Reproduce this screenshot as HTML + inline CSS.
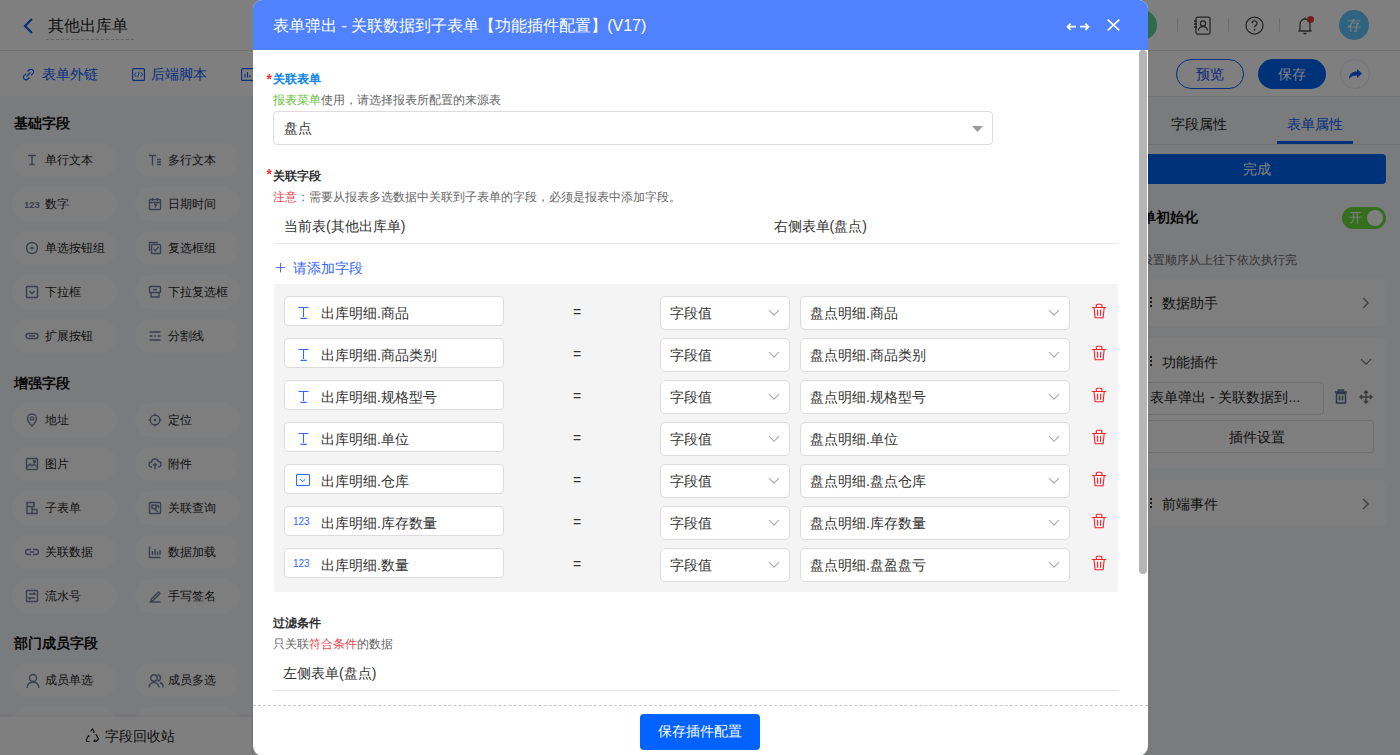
<!DOCTYPE html>
<html><head><meta charset="utf-8"><style>
*{box-sizing:border-box;margin:0;padding:0}
html,body{width:1400px;height:755px;overflow:hidden;background:#fff}
body{position:relative;font-family:"Liberation Sans",sans-serif;color:#333;font-size:14px}
.a{position:absolute;white-space:nowrap}
#hdr{left:0;top:0;width:1400px;height:51px;background:#fff;border-bottom:1px solid #e6e6e6}
#tb{left:0;top:51px;width:1400px;height:45px;background:#fff;box-shadow:0 1px 3px rgba(0,0,0,.05)}
#side{left:0;top:96px;width:253px;height:659px;background:#f5f6f9;border-right:1px solid #e3e5e8}
#rp{left:1120px;top:96px;width:280px;height:659px;background:#f5f6f9;border-top:1px solid #e6e8eb}
.pill{position:absolute;height:34px;border-radius:17px;background:#fcfcfd;width:105px}
.pill span{position:absolute;left:33px;top:0;line-height:34px;font-size:12px;color:#262626}
.pill svg{position:absolute;left:13px;top:10px}
.sect{position:absolute;left:14px;font-size:14px;font-weight:bold;color:#111;line-height:20px}
#mask{left:0;top:0;width:1400px;height:755px;background:rgba(0,0,0,.5)}
#modal{left:253px;top:0;width:895px;height:756px;background:#fff;border-radius:9px 9px 10px 10px;overflow:hidden}
#mh{left:0;top:0;width:895px;height:50px;background:#5082ff}
.lbl{font-size:12px;font-weight:bold;color:#303133;line-height:16px}
.hint{font-size:12px;color:#666;line-height:16px}
.t14{font-size:14px;color:#333;line-height:20px}
.inp{position:absolute;left:31px;width:220px;height:30px;background:#fff;border:1px solid #dcdcdc;border-radius:4px}
.inp svg{position:absolute}
.inp span{position:absolute;left:36px;top:6px;font-size:14px;line-height:20px;color:#333}
.eq{position:absolute;left:320px;font-size:14px;line-height:20px;color:#333}
.sel{position:absolute;height:34px;background:#fff;border:1px solid #dcdcdc;border-radius:5px}
.sel span{position:absolute;left:9px;top:6px;font-size:14px;line-height:20px;color:#333}
.sel svg{position:absolute;top:13px}
.trash{position:absolute;left:838px}
.card{position:absolute;left:1100px;width:286px;background:#fdfdfd;border-radius:6px}
</style></head><body>

<div id="hdr" class="a"></div>
<div id="tb" class="a"></div>
<div id="side" class="a"></div>
<div id="rp" class="a"></div>

<!-- header -->
<svg class="a" style="left:22px;top:17px" width="14" height="18" viewBox="0 0 14 18"><path d="M10 2L3 9l7 7" stroke="#0a5cff" stroke-width="2.2" fill="none"/></svg>
<div class="a" style="left:48px;top:15px;font-size:16px;line-height:22px;color:#222">其他出库单</div>
<div class="a" style="left:46px;top:39px;width:88px;border-top:1px dashed #c8c8c8"></div>
<div class="a" style="left:1127px;top:10px;width:30px;height:30px;border-radius:15px;background:#5cd698"></div>
<div class="a" style="left:1177px;top:18px;width:1px;height:14px;background:#ddd"></div>
<svg class="a" style="left:1193px;top:16px" width="19" height="19" viewBox="0 0 19 19"><rect x="3" y="1" width="14" height="17" rx="1.5" stroke="#4a4a4a" stroke-width="1.25" fill="none"/><circle cx="10" cy="7.5" r="2.6" stroke="#4a4a4a" stroke-width="1.3" fill="none"/><path d="M5.5 14.5a4.5 4 0 0 1 9 0M1 5h3M1 8h3M1 11h3" stroke="#4a4a4a" stroke-width="1.3" fill="none"/></svg>
<div class="a" style="left:1228px;top:18px;width:1px;height:14px;background:#ddd"></div>
<svg class="a" style="left:1245px;top:16px" width="19" height="19" viewBox="0 0 19 19"><circle cx="9.5" cy="9.5" r="8.5" stroke="#4a4a4a" stroke-width="1.25" fill="none"/><path d="M7 7.3a2.5 2.5 0 1 1 3.5 2.3c-.8.4-1 .9-1 1.7" stroke="#4a4a4a" stroke-width="1.25" fill="none"/><circle cx="9.5" cy="13.8" r=".9" fill="#4a4a4a"/></svg>
<div class="a" style="left:1279px;top:18px;width:1px;height:14px;background:#ddd"></div>
<svg class="a" style="left:1297px;top:15px" width="16" height="20" viewBox="0 0 16 20"><path d="M3 15.5V9.5a5 5.5 0 0 1 10 0v6l1.5 .5h-13zM6.5 18.5h3M8 2.5v1.5" stroke="#4a4a4a" stroke-width="1.3" fill="none"/></svg>
<div class="a" style="left:1307px;top:16px;width:6.5px;height:6.5px;border-radius:4px;background:#e83a3a"></div>
<div class="a" style="left:1339px;top:10px;width:30px;height:30px;border-radius:15px;background:#5fc6ff;color:#fff;font-size:14px;line-height:30px;text-align:center">存</div>

<!-- toolbar -->
<svg class="a" style="left:22px;top:68px" width="13" height="13" viewBox="0 0 13 13"><path d="M5.5 3.5l1.5-1.5a2.6 2.6 0 0 1 3.7 3.7L9 7.3M7.5 9.5L6 11a2.6 2.6 0 0 1-3.7-3.7L4 5.7M4.5 8.5l4-4" stroke="#0a5cff" stroke-width="1.1" fill="none"/></svg>
<div class="a" style="left:42px;top:64px;font-size:14px;line-height:20px;color:#0a5cff">表单外链</div>
<svg class="a" style="left:132px;top:68px" width="13" height="13" viewBox="0 0 13 13"><rect x=".6" y=".6" width="11.8" height="11.8" rx="1" stroke="#0a5cff" stroke-width="1.1" fill="none"/><path d="M4 4.5L2.5 6.5 4 8.5M9 4.5l1.5 2-1.5 2M7.2 3.8L5.8 9.2" stroke="#0a5cff" stroke-width="1" fill="none"/></svg>
<div class="a" style="left:151px;top:64px;font-size:14px;line-height:20px;color:#0a5cff">后端脚本</div>
<svg class="a" style="left:241px;top:68px" width="13" height="13" viewBox="0 0 13 13"><rect x=".6" y=".6" width="11.8" height="11.8" rx="1" stroke="#0a5cff" stroke-width="1.1" fill="none"/><path d="M4 9.5V6M6.5 9.5V4M9 9.5V7" stroke="#0a5cff" stroke-width="1.1" fill="none"/></svg>
<div class="a" style="left:1176px;top:59px;width:68px;height:30px;border-radius:15px;border:1px solid #0a5cff;color:#1a4cff;font-size:14px;line-height:28px;text-align:center">预览</div>
<div class="a" style="left:1258px;top:59px;width:68px;height:30px;border-radius:15px;background:#0064f5;color:#fff;font-size:14px;line-height:30px;text-align:center">保存</div>
<div class="a" style="left:1340px;top:59px;width:30px;height:30px;border-radius:15px;border:1px solid #e3e8f5;background:#fff"></div>
<svg class="a" style="left:1347px;top:66px" width="16" height="16" viewBox="0 0 16 16"><path d="M2 13c0-5 3-7.5 8-7.5V3l5 4.5-5 4.5V9.5c-4 0-6 1-8 3.5z" fill="#1a5cff"/></svg>

<!-- sidebar -->
<div class="sect" style="top:113px">基础字段</div>
<div class="sect" style="top:373px">增强字段</div>
<div class="sect" style="top:633px">部门成员字段</div>
<div class="pill" style="left:12px;top:143px"><svg width="14" height="14" viewBox="0 0 14 14"><path d="M3 2.5h8M7 2.5v9M4.5 11.5h5" stroke="#76809c" fill="none" stroke-width="1.4"/></svg><span>单行文本</span></div>
<div class="pill" style="left:135px;top:143px"><svg width="14" height="14" viewBox="0 0 14 14"><path d="M1 2.5h7M4.5 2.5v10M9 6.5h4M9 9h4M9 11.5h4" stroke="#76809c" fill="none" stroke-width="1.4"/></svg><span>多行文本</span></div>
<div class="pill" style="left:12px;top:187px"><svg width="16" height="14" viewBox="0 0 16 14"><text x="-1" y="11" font-family="Liberation Sans" font-size="9.5" font-weight="bold" fill="#76809c">123</text></svg><span>数字</span></div>
<div class="pill" style="left:135px;top:187px"><svg width="14" height="14" viewBox="0 0 14 14"><rect x="1.5" y="2.5" width="11" height="10" rx="1" stroke="#76809c" fill="none" stroke-width="1.4"/><path d="M1.5 5.5h11M4.5 1v3M9.5 1v3M6 7.5h2.5l-1.5 3" stroke="#76809c" fill="none" stroke-width="1.4"/></svg><span>日期时间</span></div>
<div class="pill" style="left:12px;top:231px"><svg width="14" height="14" viewBox="0 0 14 14"><circle cx="7" cy="7" r="5.5" stroke="#76809c" fill="none" stroke-width="1.4"/><circle cx="7" cy="7" r="1.6" fill="#76809c"/></svg><span>单选按钮组</span></div>
<div class="pill" style="left:135px;top:231px"><svg width="14" height="14" viewBox="0 0 14 14"><path d="M1.5 10V1.5H10" stroke="#76809c" fill="none" stroke-width="1.4"/><rect x="3.5" y="3.5" width="9" height="9" rx="1" stroke="#76809c" fill="none" stroke-width="1.4"/><path d="M5.5 8l1.7 1.7L10.5 6" stroke="#76809c" fill="none" stroke-width="1.4"/></svg><span>复选框组</span></div>
<div class="pill" style="left:12px;top:275px"><svg width="14" height="14" viewBox="0 0 14 14"><rect x="1.5" y="1.5" width="11" height="11" rx="1" stroke="#76809c" fill="none" stroke-width="1.4"/><path d="M4.5 6l2.5 2.5L9.5 6" stroke="#76809c" fill="none" stroke-width="1.4"/></svg><span>下拉框</span></div>
<div class="pill" style="left:135px;top:275px"><svg width="14" height="14" viewBox="0 0 14 14"><rect x="1.5" y="1.5" width="11" height="6" rx="1" stroke="#76809c" fill="none" stroke-width="1.4"/><path d="M3 7.5v4.5h8V7.5M5 4.5h4" stroke="#76809c" fill="none" stroke-width="1.4"/></svg><span>下拉复选框</span></div>
<div class="pill" style="left:12px;top:319px"><svg width="14" height="14" viewBox="0 0 14 14"><rect x="1" y="4.5" width="12" height="5" rx="2.5" stroke="#76809c" fill="none" stroke-width="1.4"/><path d="M4 7h6" stroke="#76809c" fill="none" stroke-width="1.4"/></svg><span>扩展按钮</span></div>
<div class="pill" style="left:135px;top:319px"><svg width="14" height="14" viewBox="0 0 14 14"><path d="M1.5 3h11M1.5 7h3M6 7h2M9.5 7h3M1.5 11h11" stroke="#76809c" fill="none" stroke-width="1.4"/></svg><span>分割线</span></div>
<div class="pill" style="left:12px;top:403px"><svg width="14" height="14" viewBox="0 0 14 14"><path d="M7 13s-4.5-4.5-4.5-7.5a4.5 4.5 0 0 1 9 0C11.5 8.5 7 13 7 13z" stroke="#76809c" fill="none" stroke-width="1.4"/><circle cx="7" cy="5.5" r="1.6" stroke="#76809c" fill="none" stroke-width="1.4"/></svg><span>地址</span></div>
<div class="pill" style="left:135px;top:403px"><svg width="14" height="14" viewBox="0 0 14 14"><circle cx="7" cy="7" r="4.8" stroke="#76809c" fill="none" stroke-width="1.4"/><circle cx="7" cy="7" r="1.3" fill="#76809c"/><path d="M7 0.5v2.5M7 11v2.5M0.5 7H3M11 7h2.5" stroke="#76809c" fill="none" stroke-width="1.4"/></svg><span>定位</span></div>
<div class="pill" style="left:12px;top:447px"><svg width="14" height="14" viewBox="0 0 14 14"><rect x="1.5" y="1.5" width="11" height="11" rx="1" stroke="#76809c" fill="none" stroke-width="1.4"/><path d="M2 10l3-3 2 2 2-2 3 3" stroke="#76809c" fill="none" stroke-width="1.4"/><circle cx="9.5" cy="4.5" r="1" stroke="#76809c" fill="none" stroke-width="1.4"/></svg><span>图片</span></div>
<div class="pill" style="left:135px;top:447px"><svg width="14" height="14" viewBox="0 0 14 14"><path d="M4 10H3.5a2.5 2.5 0 0 1 0-5 3.5 3.5 0 0 1 6.8-.5A2.6 2.6 0 0 1 10.5 10H10M7 6.5V12.5M5 8.5l2-2 2 2" stroke="#76809c" fill="none" stroke-width="1.4"/></svg><span>附件</span></div>
<div class="pill" style="left:12px;top:491px"><svg width="14" height="14" viewBox="0 0 14 14"><path d="M2 1.5h7v4H2zM2 5.5v7h5v-7M7 8.5h5v4H7" stroke="#76809c" fill="none" stroke-width="1.4"/></svg><span>子表单</span></div>
<div class="pill" style="left:135px;top:491px"><svg width="14" height="14" viewBox="0 0 14 14"><rect x="1.5" y="1.5" width="11" height="11" rx="1" stroke="#76809c" fill="none" stroke-width="1.4"/><rect x="4" y="4" width="4" height="3.5" stroke="#76809c" fill="none" stroke-width="1.4"/><path d="M6 7.5l4 3.5M8 5h2.5v2" stroke="#76809c" fill="none" stroke-width="1.4"/></svg><span>关联查询</span></div>
<div class="pill" style="left:12px;top:535px"><svg width="14" height="14" viewBox="0 0 14 14"><path d="M6 4.5H3a2.5 2.5 0 0 0 0 5h3M8 4.5h3a2.5 2.5 0 0 1 0 5H8M5 7h4" stroke="#76809c" fill="none" stroke-width="1.4"/></svg><span>关联数据</span></div>
<div class="pill" style="left:135px;top:535px"><svg width="14" height="14" viewBox="0 0 14 14"><path d="M1.5 1.5v11h11M4.5 10V6M7 10V4M9.5 10V6.5M12 10V5" stroke="#76809c" fill="none" stroke-width="1.4"/></svg><span>数据加载</span></div>
<div class="pill" style="left:12px;top:579px"><svg width="14" height="14" viewBox="0 0 14 14"><rect x="1.5" y="1.5" width="11" height="11" rx="1" stroke="#76809c" fill="none" stroke-width="1.4"/><path d="M4 5h6l-1.5-1.5M10 9H4l1.5 1.5" stroke="#76809c" fill="none" stroke-width="1.4"/></svg><span>流水号</span></div>
<div class="pill" style="left:135px;top:579px"><svg width="14" height="14" viewBox="0 0 14 14"><path d="M3 10.5L10.5 3l1.5 1.5L4.5 12H3zM1.5 13h11" stroke="#76809c" fill="none" stroke-width="1.4"/></svg><span>手写签名</span></div>
<div class="pill" style="left:12px;top:663px"><svg width="16" height="16" viewBox="0 0 16 16"><circle cx="8" cy="5" r="3.5" stroke="#76809c" fill="none" stroke-width="1.4"/><path d="M2 15a6 6 0 0 1 12 0" stroke="#76809c" fill="none" stroke-width="1.4"/></svg><span>成员单选</span></div>
<div class="pill" style="left:135px;top:663px"><svg width="16" height="16" viewBox="0 0 16 16"><circle cx="6" cy="5" r="3.2" stroke="#76809c" fill="none" stroke-width="1.4"/><path d="M1 14.5a5 5 0 0 1 10 0M9.5 2a3 3 0 0 1 0 6M12 9.5a4.5 4.5 0 0 1 3 5" stroke="#76809c" fill="none" stroke-width="1.4"/></svg><span>成员多选</span></div>
<div class="pill" style="left:12px;top:707px"><span></span></div>
<div class="pill" style="left:135px;top:707px"><span></span></div>
<div class="a" style="left:0;top:717px;width:252px;height:38px;background:#fff;box-shadow:0 -2px 4px rgba(0,0,0,.04)"></div>
<svg class="a" style="left:85px;top:728px" width="15" height="15" viewBox="0 0 15 15"><path d="M5.5 3.5L7.5 1l2 3.2M10.8 6l2.7 5-2.2 2.5H8.5M4.5 13.5H2L1.2 12 3.7 7.3M9.5 4.2l-1.5.3M3.7 7.3l.4 1.6M8.5 13.5l1.2-1.2 0 1.2" stroke="#222" stroke-width="1.2" fill="none"/></svg>
<div class="a" style="left:105px;top:726px;font-size:14px;line-height:20px;color:#222">字段回收站</div>

<!-- right panel -->
<div class="a" style="left:1171px;top:114px;font-size:14px;line-height:20px;color:#222">字段属性</div>
<div class="a" style="left:1287px;top:114px;font-size:14px;line-height:20px;color:#0a5cff">表单属性</div>
<div class="a" style="left:1120px;top:144px;width:280px;height:1px;background:#e3e5e8"></div>
<div class="a" style="left:1277px;top:141px;width:76px;height:3px;background:#0064f5"></div>
<div class="a" style="left:1100px;top:154px;width:286px;height:30px;border-radius:4px;background:#0064f5;color:#fff;font-size:14px;line-height:30px;text-align:center;padding-left:28px">完成</div>
<div class="a" style="left:1128px;top:207px;font-size:14px;font-weight:bold;line-height:20px;color:#111">表单初始化</div>
<div class="a" style="left:1342px;top:207px;width:44px;height:22px;border-radius:11px;background:#6adc3a"></div>
<div class="a" style="left:1349px;top:208px;font-size:13px;line-height:20px;color:#fff">开</div>
<div class="a" style="left:1367px;top:210px;width:16px;height:16px;border-radius:8px;background:#fff"></div>
<div class="a" style="left:1141px;top:252px;font-size:12px;line-height:16px;color:#666">设置顺序从上往下依次执行完</div>

<div class="card" style="top:279px;height:47px"></div>
<div class="a" style="left:1150px;top:297px;width:2px;height:2px;background:#333;box-shadow:0 4px 0 #333,0 8px 0 #333"></div>
<div class="a" style="left:1162px;top:293px;font-size:14px;line-height:20px;color:#222">数据助手</div>
<svg class="a" style="left:1362px;top:297px" width="8" height="12" viewBox="0 0 8 12"><path d="M1.2 1l5 5-5 5" stroke="#777" stroke-width="1.2" fill="none"/></svg>

<div class="card" style="top:338px;height:130px"></div>
<div class="a" style="left:1150px;top:356px;width:2px;height:2px;background:#333;box-shadow:0 4px 0 #333,0 8px 0 #333"></div>
<div class="a" style="left:1162px;top:352px;font-size:14px;line-height:20px;color:#222">功能插件</div>
<svg class="a" style="left:1360px;top:358px" width="12" height="8" viewBox="0 0 12 8"><path d="M1 1.2l5 5 5-5" stroke="#777" stroke-width="1.2" fill="none"/></svg>
<div class="a" style="left:1100px;top:382px;width:224px;height:33px;border-radius:4px;border:1px solid #dcdcdc;background:#fdfdfd"></div>
<div class="a" style="left:1150px;top:387px;font-size:14px;line-height:20px;color:#222">表单弹出 - 关联数据到...</div>
<svg class="a" style="left:1334px;top:389px" width="14" height="15" viewBox="0 0 14 15"><path d="M1 3h12M4.5 3V1h5v2M2.5 4.5h9v9.5h-9zM5.5 6.5v5M8.5 6.5v5" stroke="#5a6e90" stroke-width="1.6" fill="none"/></svg>
<svg class="a" style="left:1359px;top:390px" width="14" height="14" viewBox="0 0 14 14"><path d="M7 1v12M1 7h12M5 3l2-2 2 2M5 11l2 2 2-2M3 5L1 7l2 2M11 5l2 2-2 2" stroke="#777" stroke-width="1.5" fill="none"/></svg>
<div class="a" style="left:1100px;top:420px;width:274px;height:33px;border-radius:3px;border:1px solid #dcdcdc;background:#fdfdfd;font-size:14px;line-height:33px;color:#222;text-align:center;padding-left:40px">插件设置</div>

<div class="card" style="top:480px;height:47px"></div>
<div class="a" style="left:1150px;top:498px;width:2px;height:2px;background:#333;box-shadow:0 4px 0 #333,0 8px 0 #333"></div>
<div class="a" style="left:1162px;top:494px;font-size:14px;line-height:20px;color:#222">前端事件</div>
<svg class="a" style="left:1362px;top:498px" width="8" height="12" viewBox="0 0 8 12"><path d="M1.2 1l5 5-5 5" stroke="#777" stroke-width="1.2" fill="none"/></svg>

<div id="mask" class="a"></div>

<div id="modal" class="a">
  <div id="mh" class="a"></div>
  <div class="a" style="left:20px;top:15px;font-size:16px;line-height:22px;color:#fff">表单弹出 - 关联数据到子表单【功能插件配置】(V17)</div>
  <svg class="a" style="left:813px;top:21px" width="24" height="12" viewBox="0 0 24 12"><path d="M1.5 5.7h8.5M4.6 2.6L1.5 5.7l3.1 3.1M14 5.7h8.5M19.4 2.6l3.1 3.1-3.1 3.1" stroke="#fff" stroke-width="1.7" fill="none"/></svg>
  <svg class="a" style="left:854px;top:19px" width="13" height="12" viewBox="0 0 13 12"><path d="M.7 .6l11.6 10.8M12.3 .6L.7 11.4" stroke="#fff" stroke-width="1.6" fill="none"/></svg>
  <div class="a" style="left:886px;top:50px;width:8px;height:524px;border-radius:4px;background:#b5b5b5"></div>

  <div class="a" style="left:13.5px;top:71px;font-size:14px;line-height:16px;font-weight:bold;color:#e63c3c">*</div>
  <div class="a" style="left:13.5px;top:166px;font-size:14px;line-height:16px;font-weight:bold;color:#e63c3c">*</div><div class="a lbl" style="left:20px;top:71px"><span style="color:#0a84e6">关联表单</span></div>
  <div class="a hint" style="left:20px;top:92px"><span style="color:#67c23a">报表菜单</span>使用，请选择报表所配置的来源表</div>
  <div class="a" style="left:20px;top:111px;width:720px;height:34px;border:1px solid #dcdcdc;border-radius:4px"></div>
  <div class="a t14" style="left:30.5px;top:118px">盘点</div>
  <svg class="a" style="left:719px;top:126px" width="11" height="6" viewBox="0 0 11 6"><path d="M0 0h11L5.5 6z" fill="#999"/></svg>

  <div class="a lbl" style="left:20px;top:168px">关联字段</div>
  <div class="a hint" style="left:20px;top:189px"><span style="color:#e8474f">注意</span>：需要从报表多选数据中关联到子表单的字段，必须是报表中添加字段。</div>
  <div class="a t14" style="left:31px;top:216px">当前表(其他出库单)</div>
  <div class="a t14" style="left:520.5px;top:216px">右侧表单(盘点)</div>
  <div class="a" style="left:21px;top:243px;width:845px;height:1px;background:#e8e8e8"></div>
  <svg class="a" style="left:22px;top:263px" width="11" height="10" viewBox="0 0 11 10"><path d="M5.5 0v9.4M.8 4.6h9.6" stroke="#5866ff" stroke-width="1" fill="none"/></svg>
  <div class="a t14" style="left:40px;top:258px;color:#3366ff">请添加字段</div>
  <div class="a" style="left:21px;top:284px;width:844px;height:308px;background:#f4f4f4;border-radius:2px"></div>
  <div class="inp" style="top:296px"><svg style="left:12px;top:9px" width="12" height="14" viewBox="0 0 12 14"><path d="M1.5 1.5h10M6.5 1.5v9.4M3.5 12.4h6.3" stroke="#2f6bff" stroke-width="1.1" fill="none"/></svg><span>出库明细.商品</span></div>
<div class="eq" style="top:302px">=</div>
<div class="sel" style="left:407px;top:296px;width:130px"><span>字段值</span><svg style="left:107px;top:12px" width="12" height="8" viewBox="0 0 12 8"><path d="M1 1.2l5 5 5-5" stroke="#a8abb2" stroke-width="1.1" fill="none"/></svg></div>
<div class="sel" style="left:547px;top:296px;width:270px"><span>盘点明细.商品</span><svg style="left:247px;top:12px" width="12" height="8" viewBox="0 0 12 8"><path d="M1 1.2l5 5 5-5" stroke="#a8abb2" stroke-width="1.1" fill="none"/></svg></div>
<div class="trash" style="top:302px"><svg width="16" height="17" viewBox="0 0 16 17"><path d="M1.1 5.5h14M5.3 5.5V3.3q0-1 1-1h3.6q1 0 1 1v2.2M3 5.5l1.1 10.2h8l1.1-10.2M6.6 7.8v6M9.7 7.8l-.2 6" stroke="#ff1f2a" stroke-width="1.1" fill="none"/></svg></div><div class="inp" style="top:338px"><svg style="left:12px;top:9px" width="12" height="14" viewBox="0 0 12 14"><path d="M1.5 1.5h10M6.5 1.5v9.4M3.5 12.4h6.3" stroke="#2f6bff" stroke-width="1.1" fill="none"/></svg><span>出库明细.商品类别</span></div>
<div class="eq" style="top:344px">=</div>
<div class="sel" style="left:407px;top:338px;width:130px"><span>字段值</span><svg style="left:107px;top:12px" width="12" height="8" viewBox="0 0 12 8"><path d="M1 1.2l5 5 5-5" stroke="#a8abb2" stroke-width="1.1" fill="none"/></svg></div>
<div class="sel" style="left:547px;top:338px;width:270px"><span>盘点明细.商品类别</span><svg style="left:247px;top:12px" width="12" height="8" viewBox="0 0 12 8"><path d="M1 1.2l5 5 5-5" stroke="#a8abb2" stroke-width="1.1" fill="none"/></svg></div>
<div class="trash" style="top:344px"><svg width="16" height="17" viewBox="0 0 16 17"><path d="M1.1 5.5h14M5.3 5.5V3.3q0-1 1-1h3.6q1 0 1 1v2.2M3 5.5l1.1 10.2h8l1.1-10.2M6.6 7.8v6M9.7 7.8l-.2 6" stroke="#ff1f2a" stroke-width="1.1" fill="none"/></svg></div><div class="inp" style="top:380px"><svg style="left:12px;top:9px" width="12" height="14" viewBox="0 0 12 14"><path d="M1.5 1.5h10M6.5 1.5v9.4M3.5 12.4h6.3" stroke="#2f6bff" stroke-width="1.1" fill="none"/></svg><span>出库明细.规格型号</span></div>
<div class="eq" style="top:386px">=</div>
<div class="sel" style="left:407px;top:380px;width:130px"><span>字段值</span><svg style="left:107px;top:12px" width="12" height="8" viewBox="0 0 12 8"><path d="M1 1.2l5 5 5-5" stroke="#a8abb2" stroke-width="1.1" fill="none"/></svg></div>
<div class="sel" style="left:547px;top:380px;width:270px"><span>盘点明细.规格型号</span><svg style="left:247px;top:12px" width="12" height="8" viewBox="0 0 12 8"><path d="M1 1.2l5 5 5-5" stroke="#a8abb2" stroke-width="1.1" fill="none"/></svg></div>
<div class="trash" style="top:386px"><svg width="16" height="17" viewBox="0 0 16 17"><path d="M1.1 5.5h14M5.3 5.5V3.3q0-1 1-1h3.6q1 0 1 1v2.2M3 5.5l1.1 10.2h8l1.1-10.2M6.6 7.8v6M9.7 7.8l-.2 6" stroke="#ff1f2a" stroke-width="1.1" fill="none"/></svg></div><div class="inp" style="top:422px"><svg style="left:12px;top:9px" width="12" height="14" viewBox="0 0 12 14"><path d="M1.5 1.5h10M6.5 1.5v9.4M3.5 12.4h6.3" stroke="#2f6bff" stroke-width="1.1" fill="none"/></svg><span>出库明细.单位</span></div>
<div class="eq" style="top:428px">=</div>
<div class="sel" style="left:407px;top:422px;width:130px"><span>字段值</span><svg style="left:107px;top:12px" width="12" height="8" viewBox="0 0 12 8"><path d="M1 1.2l5 5 5-5" stroke="#a8abb2" stroke-width="1.1" fill="none"/></svg></div>
<div class="sel" style="left:547px;top:422px;width:270px"><span>盘点明细.单位</span><svg style="left:247px;top:12px" width="12" height="8" viewBox="0 0 12 8"><path d="M1 1.2l5 5 5-5" stroke="#a8abb2" stroke-width="1.1" fill="none"/></svg></div>
<div class="trash" style="top:428px"><svg width="16" height="17" viewBox="0 0 16 17"><path d="M1.1 5.5h14M5.3 5.5V3.3q0-1 1-1h3.6q1 0 1 1v2.2M3 5.5l1.1 10.2h8l1.1-10.2M6.6 7.8v6M9.7 7.8l-.2 6" stroke="#ff1f2a" stroke-width="1.1" fill="none"/></svg></div><div class="inp" style="top:464px"><svg style="left:11px;top:9px" width="14" height="12" viewBox="0 0 14 12"><rect x=".5" y=".5" width="13" height="11" rx="1" stroke="#2f6bff" stroke-width="1.1" fill="none"/><path d="M4 5.1l2.7 2.6 2.7-2.6" stroke="#2f6bff" stroke-width="1" fill="none"/></svg><span>出库明细.仓库</span></div>
<div class="eq" style="top:470px">=</div>
<div class="sel" style="left:407px;top:464px;width:130px"><span>字段值</span><svg style="left:107px;top:12px" width="12" height="8" viewBox="0 0 12 8"><path d="M1 1.2l5 5 5-5" stroke="#a8abb2" stroke-width="1.1" fill="none"/></svg></div>
<div class="sel" style="left:547px;top:464px;width:270px"><span>盘点明细.盘点仓库</span><svg style="left:247px;top:12px" width="12" height="8" viewBox="0 0 12 8"><path d="M1 1.2l5 5 5-5" stroke="#a8abb2" stroke-width="1.1" fill="none"/></svg></div>
<div class="trash" style="top:470px"><svg width="16" height="17" viewBox="0 0 16 17"><path d="M1.1 5.5h14M5.3 5.5V3.3q0-1 1-1h3.6q1 0 1 1v2.2M3 5.5l1.1 10.2h8l1.1-10.2M6.6 7.8v6M9.7 7.8l-.2 6" stroke="#ff1f2a" stroke-width="1.1" fill="none"/></svg></div><div class="inp" style="top:506px"><svg style="left:8px;top:7px" width="20" height="14" viewBox="0 0 20 14"><text x="0" y="10.9" font-family="Liberation Sans" font-size="10" fill="#3366ff">123</text></svg><span>出库明细.库存数量</span></div>
<div class="eq" style="top:512px">=</div>
<div class="sel" style="left:407px;top:506px;width:130px"><span>字段值</span><svg style="left:107px;top:12px" width="12" height="8" viewBox="0 0 12 8"><path d="M1 1.2l5 5 5-5" stroke="#a8abb2" stroke-width="1.1" fill="none"/></svg></div>
<div class="sel" style="left:547px;top:506px;width:270px"><span>盘点明细.库存数量</span><svg style="left:247px;top:12px" width="12" height="8" viewBox="0 0 12 8"><path d="M1 1.2l5 5 5-5" stroke="#a8abb2" stroke-width="1.1" fill="none"/></svg></div>
<div class="trash" style="top:512px"><svg width="16" height="17" viewBox="0 0 16 17"><path d="M1.1 5.5h14M5.3 5.5V3.3q0-1 1-1h3.6q1 0 1 1v2.2M3 5.5l1.1 10.2h8l1.1-10.2M6.6 7.8v6M9.7 7.8l-.2 6" stroke="#ff1f2a" stroke-width="1.1" fill="none"/></svg></div><div class="inp" style="top:548px"><svg style="left:8px;top:7px" width="20" height="14" viewBox="0 0 20 14"><text x="0" y="10.9" font-family="Liberation Sans" font-size="10" fill="#3366ff">123</text></svg><span>出库明细.数量</span></div>
<div class="eq" style="top:554px">=</div>
<div class="sel" style="left:407px;top:548px;width:130px"><span>字段值</span><svg style="left:107px;top:12px" width="12" height="8" viewBox="0 0 12 8"><path d="M1 1.2l5 5 5-5" stroke="#a8abb2" stroke-width="1.1" fill="none"/></svg></div>
<div class="sel" style="left:547px;top:548px;width:270px"><span>盘点明细.盘盈盘亏</span><svg style="left:247px;top:12px" width="12" height="8" viewBox="0 0 12 8"><path d="M1 1.2l5 5 5-5" stroke="#a8abb2" stroke-width="1.1" fill="none"/></svg></div>
<div class="trash" style="top:554px"><svg width="16" height="17" viewBox="0 0 16 17"><path d="M1.1 5.5h14M5.3 5.5V3.3q0-1 1-1h3.6q1 0 1 1v2.2M3 5.5l1.1 10.2h8l1.1-10.2M6.6 7.8v6M9.7 7.8l-.2 6" stroke="#ff1f2a" stroke-width="1.1" fill="none"/></svg></div>

  <div class="a lbl" style="left:20px;top:615px">过滤条件</div>
  <div class="a hint" style="left:20px;top:636px">只关联<span style="color:#e8474f">符合条件</span>的数据</div>
  <div class="a t14" style="left:30px;top:663px">左侧表单(盘点)</div>
  <div class="a" style="left:20px;top:690px;width:846px;height:1px;background:#e8e8e8"></div>
  <div class="a" style="left:0;top:705px;width:895px;height:1px;border-top:1px dashed #c8c8c8"></div>
  <div class="a" style="left:387px;top:714px;width:120px;height:36px;border-radius:4px;background:#0062ff;color:#fff;font-size:14px;font-weight:500;line-height:34px;text-align:center">保存插件配置</div>
</div>

</body></html>
